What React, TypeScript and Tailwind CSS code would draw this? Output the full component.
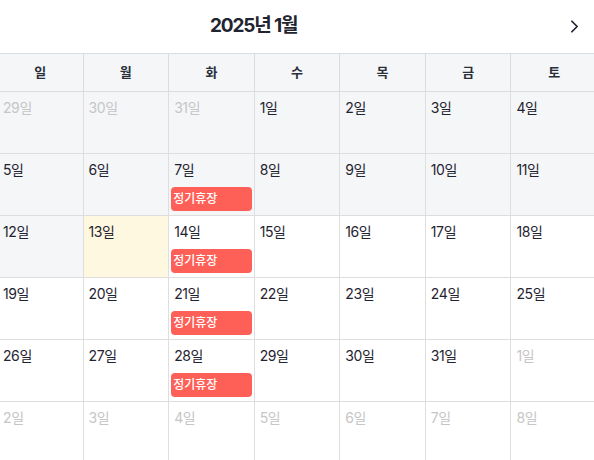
import { ChevronRight } from 'lucide-react';

interface Day {
  day: number;
  other?: boolean;
  past?: boolean;
  today?: boolean;
  closed?: boolean;
}

const WEEKDAYS = ['일', '월', '화', '수', '목', '금', '토'];

// 2025년 1월 달력 (13일 = 오늘)
function buildWeeks(): Day[][] {
  const cells: Day[] = [];
  [29, 30, 31].forEach((d) => cells.push({ day: d, other: true, past: true }));
  for (let d = 1; d <= 31; d++) {
    cells.push({ day: d, past: d < 13, today: d === 13, closed: d % 7 === 0 });
  }
  for (let d = 1; d <= 8; d++) cells.push({ day: d, other: true });
  const weeks: Day[][] = [];
  for (let i = 0; i < cells.length; i += 7) weeks.push(cells.slice(i, i + 7));
  return weeks;
}

export default function App() {
  const weeks = buildWeeks();

  return (
    <main className="w-[594px] h-[460px] overflow-hidden bg-white" style={{ fontFamily: 'Inter, "Noto Sans CJK KR", sans-serif' }}>
      <div className="w-[599px] -ml-[2px]">
        {/* Header */}
        <div className="flex items-center h-[54px] border-b border-[#d9dce1] pl-[212px] pr-[12px]">
          <h2 className="text-[19px] font-bold tracking-[-0.06em] text-[#1f2430]">2025년 1월</h2>
          <button className="ml-auto text-[#1f2430]">
            <ChevronRight size={21} strokeWidth={2} />
          </button>
        </div>

        {/* 요일 */}
        <div className="grid grid-cols-7 bg-[#f5f6f8] border-b border-[#d9dce1]">
          {WEEKDAYS.map((w, i) => (
            <div
              key={w}
              className={`h-[37px] flex items-center justify-center text-[13px] font-bold text-[#2a2f3a] ${i < 6 ? 'border-r border-[#d9dce1]' : ''}`}
            >
              {w}
            </div>
          ))}
        </div>

        {/* 날짜 */}
        {weeks.map((week, wi) => (
          <div key={wi} className="grid grid-cols-7 border-b border-[#dedede]">
            {week.map((d, i) => (
              <div
                key={i}
                className={`h-[61px] px-[2px] pt-[6px] ${i < 6 ? 'border-r border-[#dedede]' : ''} ${
                  d.today ? 'bg-[#fff8e0]' : d.past ? 'bg-[#f5f6f8]' : 'bg-white'
                }`}
              >
                <div className={`pl-[3px] text-[14px] leading-[20px] tracking-[-0.03em] ${d.other ? 'text-[#c6c6c6]' : 'text-[#1f2430]'}`}>
                  {d.day}일
                </div>
                {d.closed && (
                  <div className="mt-[7px] h-[24px] flex items-center rounded-[4px] bg-[#fe5f57] px-[2px] text-[12px] font-medium text-white">
                    정기휴장
                  </div>
                )}
              </div>
            ))}
          </div>
        ))}
      </div>
    </main>
  );
}
